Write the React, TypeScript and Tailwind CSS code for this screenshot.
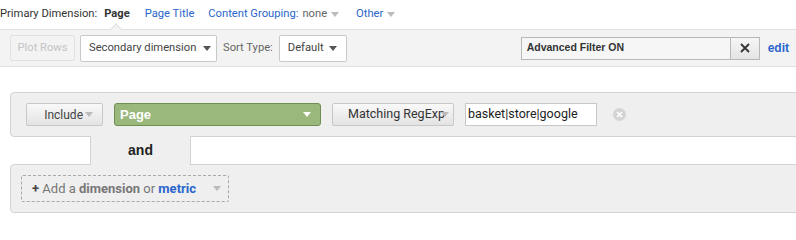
import React from 'react';

function Caret({ className = '' }: { className?: string }) {
  return (
    <svg width="8" height="5" viewBox="0 0 8 5" className={className}>
      <path d="M0 0h8L4 5z" fill="currentColor" />
    </svg>
  );
}

export default function App() {
  return (
    <div className="w-[796px] h-[240px] bg-white overflow-hidden font-['Roboto',sans-serif] text-[#333]">
      {/* Primary dimension row */}
      <div className="flex items-center h-[29px] text-[11.2px] pb-[1px]">
        <span className="text-[#333]">Primary Dimension:</span>
        <span className="ml-[7px] font-bold text-[#333]">Page</span>
        <span className="ml-[15px] text-[#2a66cc]">Page Title</span>
        <span className="ml-[14px] text-[#2a66cc]">Content Grouping:</span>
        <span className="ml-[4px] text-[#666]">none</span>
        <Caret className="ml-[4px] text-[#bbb]" />
        <span className="ml-[17px] text-[#2a66cc]">Other</span>
        <Caret className="ml-[4px] text-[#bbb]" />
      </div>

      {/* Toolbar */}
      <div className="relative flex items-center h-[38px] bg-[#f3f3f3] border-y border-[#e0e0e0] pl-[10px] text-[11.2px]">
        <div className="absolute left-[112px] top-[-5px] w-[8px] h-[8px] rotate-45 bg-[#f3f3f3] border-l border-t border-[#e0e0e0]" />
        <div className="h-[26px] w-[65px] flex items-center justify-center border border-[#e2e2e2] rounded-[2px] bg-[#f3f3f3] text-[#c4c4c4]">
          Plot Rows
        </div>
        <div className="ml-[5px] h-[27px] w-[137px] flex items-center justify-between pl-[8px] pr-[5px] border border-[#c8c8c8] rounded-[2px] bg-white text-[#444]">
          <span>Secondary dimension</span>
          <Caret className="text-[#555]" />
        </div>
        <span className="ml-[6px] text-[#666]">Sort Type:</span>
        <div className="ml-[6px] h-[27px] w-[68px] flex items-center justify-between pl-[8px] pr-[9px] border border-[#c8c8c8] rounded-[2px] bg-white text-[#444]">
          <span>Default</span>
          <Caret className="text-[#555]" />
        </div>
        <div className="ml-auto flex items-center pr-[7px]">
          <div className="h-[23px] w-[210px] flex items-center px-[5px] border border-[#b8b8b8] bg-[#f6f6f6] font-['Liberation_Sans',sans-serif] font-bold text-[10.5px] text-[#333]">
            Advanced Filter ON
          </div>
          <div className="h-[23px] w-[29px] flex items-center justify-center border border-l-0 border-[#b8b8b8] bg-gradient-to-b from-[#f6f6f6] to-[#e4e4e4]">
            <svg width="10" height="10" viewBox="0 0 10 10">
              <path d="M1 1l8 8M9 1l-8 8" stroke="#333" strokeWidth="1.8" />
            </svg>
          </div>
          <span className="ml-[8px] font-['Liberation_Sans',sans-serif] font-bold text-[12px] text-[#2a66cc]">edit</span>
        </div>
      </div>

      {/* Filter editor */}
      <div className="mt-[25px] ml-[10px] w-[800px]">
        <div className="h-[45px] flex items-center pl-[15px] bg-[#efefef] border border-[#d2d2d2] rounded-l-[4px] text-[12px]">
          <div className="h-[23px] w-[77px] flex items-center justify-end pr-[9px] border border-[#c8c8c8] rounded-[2px] bg-gradient-to-b from-[#f9f9f9] to-[#e3e3e3] text-[#444]">
            <span>Include</span>
            <Caret className="ml-[2px] text-[#bbb]" />
          </div>
          <div className="ml-[11px] h-[23px] w-[207px] flex items-center justify-between pl-[5px] pr-[9px] border border-[#6f8f52] rounded-[3px] bg-[#9bb87c] text-white font-['Liberation_Sans',sans-serif] font-bold text-[13px]">
            <span>Page</span>
            <Caret className="text-white" />
          </div>
          <div className="ml-[11px] h-[23px] w-[122px] flex items-center pl-[15px] border border-[#c8c8c8] rounded-[2px] bg-gradient-to-b from-[#f9f9f9] to-[#e3e3e3] text-[#333] text-[12.5px]">
            <span className="whitespace-nowrap">Matching RegExp</span>
            <Caret className="-ml-[4px] text-[#bbb]" />
          </div>
          <div className="ml-[11px] h-[23px] w-[132px] flex items-center px-[2px] border border-[#c8c8c8] bg-white text-[#222] text-[12.5px]">
            basket|store|google
          </div>
          <div className="ml-[16px] w-[13px] h-[13px] rounded-full bg-[#d4d4d4] flex items-center justify-center">
            <svg width="7" height="7" viewBox="0 0 7 7">
              <path d="M1 1l5 5M6 1l-5 5" stroke="#fff" strokeWidth="1.5" />
            </svg>
          </div>
        </div>

        <div className="relative z-10 -my-px ml-[80px] w-[101px] h-[29px] flex items-center justify-center bg-[#efefef] border-x border-[#d2d2d2] font-['Liberation_Sans',sans-serif] font-bold text-[14px] text-[#222]">
          and
        </div>

        <div className="h-[49px] flex items-center pl-[10px] bg-[#efefef] border border-[#d2d2d2] rounded-l-[4px]">
          <div className="h-[27px] w-[208px] flex items-center justify-between pl-[10px] pr-[7px] border border-dashed border-[#a8a8a8] rounded-[2px] text-[13px] text-[#777]">
            <span>
              <span className="font-bold text-[#444]">+</span> Add a <span className="font-bold">dimension</span> or{' '}
              <span className="font-bold text-[#2a66cc]">metric</span>
            </span>
            <Caret className="text-[#bbb]" />
          </div>
        </div>
      </div>
    </div>
  );
}
